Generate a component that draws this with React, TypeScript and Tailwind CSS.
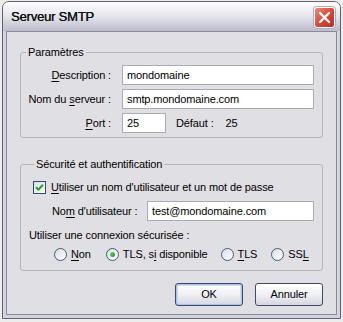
import React from "react";

function U({ children }: { children: React.ReactNode }) {
  return <span className="underline underline-offset-[2px]">{children}</span>;
}

function Field({ value, className = "" }: { value: string; className?: string }) {
  return (
    <div
      className={`h-[20px] border border-[#a5acb5] bg-white pl-[4px] flex items-center text-black ${className}`}
    >
      {value}
    </div>
  );
}

function Radio({ checked = false }: { checked?: boolean }) {
  return (
    <div className="w-[13px] h-[13px] rounded-full border border-[#3f5c7e] bg-gradient-to-br from-[#dcdce4] to-white flex items-center justify-center shrink-0">
      {checked && (
        <div className="w-[5px] h-[5px] rounded-full bg-gradient-to-br from-[#6fd66f] to-[#139613]" />
      )}
    </div>
  );
}

function Checkbox() {
  return (
    <div className="w-[13px] h-[13px] border border-[#2a4e7a] bg-gradient-to-br from-[#dcdce4] to-white flex items-center justify-center shrink-0">
      <svg width="9" height="9" viewBox="0 0 9 9">
        <path d="M1 4.2 L3.4 6.6 L8 1.8" fill="none" stroke="#21a121" strokeWidth="2" />
      </svg>
    </div>
  );
}

function Button({ label, def = false }: { label: string; def?: boolean }) {
  return (
    <div
      className={`w-[68px] h-[23px] rounded-[3px] border border-[#3e4a66] bg-gradient-to-b from-white via-[#f0f0f5] to-[#d6d6e0] flex items-center justify-center ${
        def ? "shadow-[inset_0_0_0_1px_#a9c2ea,inset_0_0_0_2px_#cfdcf4]" : ""
      }`}
    >
      {label}
    </div>
  );
}

export default function App() {
  return (
    <div className="w-[343px] h-[322px] bg-[#ececec] pl-[2px] pt-[1px] font-['Liberation_Sans',Arial,sans-serif] text-[11px] leading-[13px] tracking-[-0.12px] text-black whitespace-nowrap">
      <div className="w-[339px] h-[318px] border border-[#5f5f76] rounded-t-[7px] overflow-hidden flex flex-col">
        {/* Title bar */}
        <div className="h-[29px] shrink-0 bg-gradient-to-b from-[#fefefe] via-[#e4e4ec] to-[#bcbccc] flex items-center pl-[8px] pr-[5px]">
          <span className="text-[13px] leading-[16px] tracking-[-0.2px] text-[#111] flex-1 pt-[1px] [text-shadow:0.3px_0_0_#111]">
            Serveur SMTP
          </span>
          <div className="w-[21px] h-[21px] rounded-[3px] border border-white bg-gradient-to-br from-[#f08a7a] via-[#d64a3a] to-[#b5301f] flex items-center justify-center mt-[2px] shadow-[0_0_0_1px_#b0b0c0]">
            <svg width="13" height="13" viewBox="0 0 13 13">
              <path d="M2 2 L11 11 M11 2 L2 11" stroke="white" strokeWidth="2.4" strokeLinecap="round" />
            </svg>
          </div>
        </div>
        {/* Frame band */}
        <div className="flex-1 flex flex-col bg-[#d4d4de] px-[3px] pb-[3px]">
          <div className="flex-1 border border-[#8a8a9e] bg-[#e0dfe3] px-[13px] pt-[14px]">
            {/* Group 1 */}
            <fieldset className="min-w-0 border border-[#b4b4bc] rounded-[3px] pr-[8px] pb-[4px]">
              <legend className="ml-[5px] px-[2px]">Paramètres</legend>
              <div className="grid grid-cols-[90px_1fr] gap-x-[11px] gap-y-[4px] items-center pt-[6px]">
                <div className="text-right">
                  <U>D</U>escription :
                </div>
                <Field value="mondomaine" />
                <div className="text-right">
                  Nom du <U>s</U>erveur :
                </div>
                <Field value="smtp.mondomaine.com" />
                <div className="text-right">
                  <U>P</U>ort :
                </div>
                <div className="flex items-center">
                  <Field value="25" className="w-[44px]" />
                  <span className="ml-[10px]">Défaut :</span>
                  <span className="ml-[12px]">25</span>
                </div>
              </div>
            </fieldset>
            {/* Group 2 */}
            <fieldset className="min-w-0 mt-[20px] border border-[#b4b4bc] rounded-[3px] pl-[8px] pr-[8px] pb-[9px]">
              <legend className="ml-[5px] px-[2px]">Sécurité et authentification</legend>
              <div className="flex items-center gap-[5px] pl-[4px] pt-[10px]">
                <Checkbox />
                <span>
                  <U>U</U>tiliser un nom d'utilisateur et un mot de passe
                </span>
              </div>
              <div className="flex items-center mt-[7px] pl-[23px]">
                <span className="w-[95px]">
                  No<U>m</U> d'utilisateur :
                </span>
                <Field value="test@mondomaine.com" className="flex-1 min-w-0" />
              </div>
              <div className="mt-[8px]">Utiliser une connexion sécurisée :</div>
              <div className="flex items-center mt-[6px] pl-[25px]">
                <Radio />
                <span className="ml-[4px]">
                  <U>N</U>on
                </span>
                <div className="ml-[15px]">
                  <Radio checked />
                </div>
                <span className="ml-[4px]">
                  TLS, s<U>i</U> disponible
                </span>
                <div className="ml-[13px]">
                  <Radio />
                </div>
                <span className="ml-[4px]">
                  <U>T</U>LS
                </span>
                <div className="ml-[14px]">
                  <Radio />
                </div>
                <span className="ml-[4px]">
                  SS<U>L</U>
                </span>
              </div>
            </fieldset>
            <div className="flex justify-end gap-[12px] mt-[12px]">
              <Button label="OK" def />
              <Button label="Annuler" />
            </div>
          </div>
        </div>
      </div>
    </div>
  );
}
